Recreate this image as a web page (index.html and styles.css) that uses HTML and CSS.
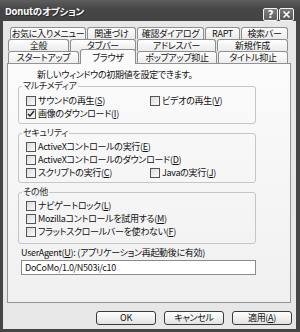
FILE: index.html
```html
<!doctype html>
<html>
<head>
	<meta charset="utf-8">
	<title>Donutのオプション</title>
	<link rel="stylesheet" href="styles.css">
</head>
<body>
	<div class="window">
		<div class="titlebar">
			<span class="title">Donutのオプション</span>
			<span class="caption-btns">
				<span class="cap-btn">?</span>
				<span class="cap-btn close">
					<svg width="9" height="9" viewBox="0 0 9 9"><path d="M1.5 1.5l6 6M7.5 1.5l-6 6" stroke="#fff" stroke-width="1.6" fill="none"/></svg>
				</span>
			</span>
		</div>

		<div class="client">
			<div class="tabs">
				<div class="tab-row row1">
					<span class="tab">お気に入りメニュー</span>
					<span class="tab">関連づけ</span>
					<span class="tab">確認ダイアログ</span>
					<span class="tab">RAPT</span>
					<span class="tab">検索バー</span>
				</div>
				<div class="tab-row row2">
					<span class="tab">全般</span>
					<span class="tab">タブバー</span>
					<span class="tab">アドレスバー</span>
					<span class="tab">新規作成</span>
				</div>
				<div class="tab-row row3">
					<span class="tab">スタートアップ</span>
					<span class="tab selected">ブラウザ</span>
					<span class="tab">ポップアップ抑止</span>
					<span class="tab">タイトル抑止</span>
				</div>
			</div>

			<div class="panel">
				<p class="intro">新しいウィンドウの初期値を設定できます。</p>

				<fieldset class="group first">
					<legend>マルチメディア</legend>
					<div class="opts">
						<label class="chk"><span class="box"></span>サウンドの再生(<u>S</u>)</label>
						<label class="chk"><span class="box"></span>ビデオの再生(<u>V</u>)</label>
						<label class="chk wide"><span class="box on"><svg width="8" height="8" viewBox="0 0 8 8"><path d="M1 4l2 2 4-5" stroke="#222" stroke-width="1.4" fill="none"/></svg></span>画像のダウンロード(<u>I</u>)</label>
					</div>
				</fieldset>

				<fieldset class="group">
					<legend>セキュリティ</legend>
					<div class="opts">
						<label class="chk wide"><span class="box"></span>ActiveXコントロールの実行(<u>E</u>)</label>
						<label class="chk wide"><span class="box"></span>ActiveXコントロールのダウンロード(<u>D</u>)</label>
						<label class="chk"><span class="box"></span>スクリプトの実行(<u>C</u>)</label>
						<label class="chk"><span class="box"></span>Javaの実行(<u>J</u>)</label>
					</div>
				</fieldset>

				<fieldset class="group last">
					<legend>その他</legend>
					<div class="opts">
						<label class="chk wide"><span class="box"></span>ナビゲートロック(<u>L</u>)</label>
						<label class="chk wide"><span class="box"></span>Mozillaコントロールを試用する(<u>M</u>)</label>
						<label class="chk wide"><span class="box"></span>フラットスクロールバーを使わない(<u>F</u>)</label>
					</div>
				</fieldset>

				<div class="ua-label">UserAgent(<u>U</u>): (アプリケーション再起動後に有効)</div>
				<div class="ua-input">DoCoMo/1.0/N503i/c10</div>
			</div>

			<div class="buttons">
				<span class="btn">OK</span>
				<span class="btn">キャンセル</span>
				<span class="btn">適用(<u>A</u>)</span>
			</div>
		</div>
	</div>
</body>
</html>
```

FILE: styles.css
```css
html,
body {
	margin: 0;
}

body {
	width: 300px;
	height: 332px;
	overflow: hidden;
	font: 9px/12px "Noto Sans CJK JP", "Noto Sans", sans-serif;
	font-feature-settings: "palt";
	letter-spacing: -0.3px;
	color: #111;
}

u {
	text-decoration: underline;
	text-underline-offset: 1px;
}

.window {
	height: 332px;
	display: flex;
	flex-direction: column;
	background: #454545;
}

/* title bar */
.titlebar {
	height: 21px;
	flex: none;
	display: flex;
	align-items: flex-start;
	padding: 0 6px 0 5px;
	background: linear-gradient(#5e5e5e, #474747 40%, #434343);
	color: #fff;
}

.title {
	margin-top: 5px;
	font-size: 9.5px;
	font-weight: bold;
	letter-spacing: -0.2px;
	text-shadow: 1px 1px 0 #2b2b2b;
}

.caption-btns {
	margin-left: auto;
	margin-top: 8px;
	display: flex;
	gap: 1px;
}

.cap-btn {
	width: 13px;
	height: 11px;
	border: 1px solid #f4f4f4;
	border-radius: 2px;
	background: linear-gradient(#808080, #5e5e5e);
	color: #fff;
	display: flex;
	align-items: center;
	justify-content: center;
	font: bold 10px/1 "DejaVu Sans", sans-serif;
}

.cap-btn.close {
	background: linear-gradient(#7a7a7a, #555);
}

/* dialog client area */
.client {
	flex: 1;
	margin: 0 4px 3px 3px;
	padding: 6px 5px 4px 4px;
	background: #e7e7e7;
	display: flex;
	flex-direction: column;
}

.tab-row {
	display: grid;
	height: 12px;
	margin-right: 2px;
}

.row1 {
	margin-left: 3px;
	grid-template-columns: 77px 50px 68px 36px 48px;
}

.row2 {
	margin-left: 1px;
	grid-template-columns: 62px 67px 80px 72px;
}

.row3 {
	margin-left: 1px;
	grid-template-columns: 72px 57px 81px 71px;
}

.tab {
	margin-right: 1px;
	border: 1px solid #8e8e8e;
	border-bottom: none;
	border-radius: 3px 3px 0 0;
	background: linear-gradient(#fefefe, #ebebeb);
	text-align: center;
	line-height: 11px;
	white-space: nowrap;
}

.tab.selected {
	position: relative;
	z-index: 1;
	margin-top: -2px;
	box-sizing: border-box;
	height: 15px;
	padding-top: 2px;
	line-height: 12px;
	background: #fbfbfb;
}

/* page of the tab */
.panel {
	height: 240px;
	flex: none;
	box-sizing: border-box;
	border: 1px solid #939393;
	background: linear-gradient(#fbfbfb, #f0f0f0);
}

.intro {
	margin: 5px 0 0 29px;
	line-height: 11px;
}

.group {
	width: 238px;
	box-sizing: border-box;
	margin: 3px 0 0 10px;
	padding: 1px 0 3px 7px;
	border: 1px solid #c6c6c6;
	border-radius: 3px;
}

.group.first {
	margin-top: 1px;
	padding-top: 3px;
}

.group.first legend {
	line-height: 10px;
}

.group.last {
	padding-bottom: 5px;
}

.group legend {
	margin-left: -4px;
	padding: 0 1px;
	color: #2a2a2a;
}

.opts {
	display: grid;
	grid-template-columns: 124px 1fr;
	grid-auto-rows: 13px;
}

.chk {
	display: flex;
	align-items: center;
	white-space: nowrap;
}

.chk.wide {
	grid-column: 1 / 3;
}

.box {
	width: 8px;
	height: 8px;
	margin-right: 2px;
	border: 1px solid #555;
	background: linear-gradient(135deg, #dcdcdc, #fafafa);
	display: flex;
	align-items: center;
	justify-content: center;
}

.ua-label {
	margin: 3px 0 0 13px;
}

.ua-input {
	width: 235px;
	height: 15px;
	box-sizing: border-box;
	margin: 1px 0 0 13px;
	padding: 0 3px;
	border: 1px solid #8a8a8a;
	background: #fff;
	line-height: 13px;
}

/* bottom buttons */
.buttons {
	margin: 8px -1px 0 0;
	display: flex;
	justify-content: flex-end;
	gap: 8px;
}

.btn {
	width: 60px;
	height: 14px;
	box-sizing: border-box;
	border: 1px solid #3a3a3a;
	border-radius: 3px;
	background: linear-gradient(#fff, #e2e2e2);
	text-align: center;
	line-height: 12px;
}
```
